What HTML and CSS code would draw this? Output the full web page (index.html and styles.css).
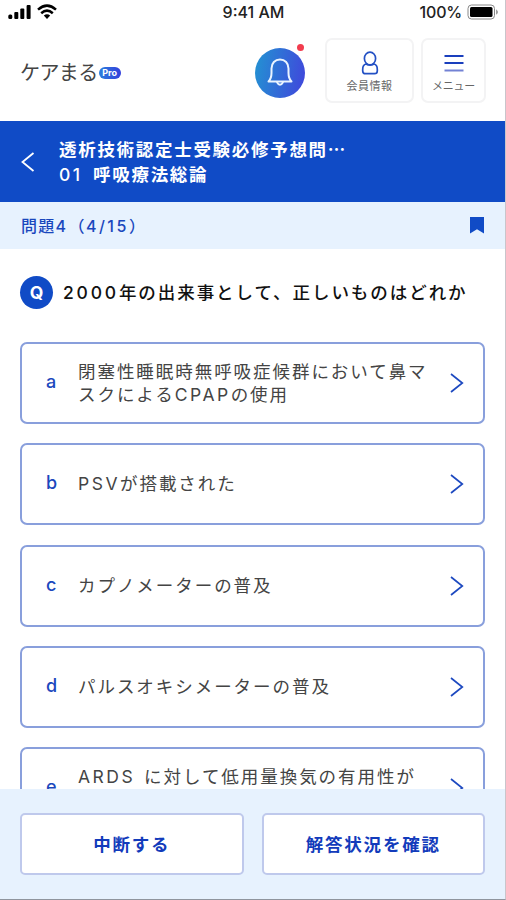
FILE: index.html
```html
<!DOCTYPE html>
<html lang="ja">
<head>
    <meta charset="UTF-8">
    <meta name="viewport" content="width=device-width, initial-scale=1.0">
    <title>ケアまる Pro</title>
    <link rel="stylesheet" href="styles.css">
</head>
<body>
    <div class="app">
        <div class="status-bar">
            <div class="signals">
                <svg width="24" height="16" viewBox="0 0 24 16">
                    <rect x="0.3" y="10.5" width="4" height="4.5" rx="1.5"/>
                    <rect x="6.3" y="8" width="4" height="7" rx="1"/>
                    <rect x="12.3" y="4.5" width="4" height="10.5" rx="1"/>
                    <rect x="18.6" y="1" width="4" height="14" rx="1"/>
                </svg>
                <svg class="wifi" width="20" height="16" viewBox="0 0 20 16">
                    <path d="M1 5.6Q10-2.4 19 5.6M4.2 9.2Q10 4 15.8 9.2" fill="none" stroke="#000" stroke-width="2.5"/>
                    <path d="M6.8 11.6Q10 9 13.2 11.6L10 15Z"/>
                </svg>
            </div>
            <span class="time">9:41 AM</span>
            <div class="power">
                <span>100%</span>
                <svg width="32" height="16" viewBox="0 0 32 16">
                    <rect x="1" y="1" width="26.5" height="14" rx="3.5" fill="none" stroke="#888"/>
                    <rect x="3" y="3" width="22.5" height="10" rx="1.5"/>
                    <path d="M29.2 5.2Q32.5 8 29.2 10.8Z" fill="#888"/>
                </svg>
            </div>
        </div>

        <header class="header">
            <div class="logo">ケアまる<span class="pro">Pro</span></div>
            <div class="bell">
                <svg width="26" height="30" viewBox="0 0 26 30" fill="none" stroke="#eaf4ff" stroke-width="2" stroke-linejoin="round">
                    <path d="M1.5 23.5H24.5C22 21 21.5 19 21.5 15V10.5C21.5 5 18 1.5 13 1.5S4.5 5 4.5 10.5V15C4.5 19 4 21 1.5 23.5Z"/>
                    <path d="M9.8 24Q13 29.5 16.2 24"/>
                </svg>
                <span class="dot"></span>
            </div>
            <div class="nav-card member">
                <svg width="18" height="24" viewBox="0 0 18 24" fill="#fff" stroke="#2350c4" stroke-width="1.7">
                    <ellipse cx="9" cy="7.5" rx="5.6" ry="6.3"/>
                    <path d="M5 13Q9 15.5 13 13C15.5 13.5 16.3 15 16.3 18.5V20Q16.3 22.7 13.5 22.7H4.5Q1.7 22.7 1.7 20V18.5C1.7 15 2.5 13.5 5 13Z"/>
                </svg>
                <span>会員情報</span>
            </div>
            <div class="nav-card menu">
                <svg width="20" height="24" viewBox="0 0 20 24" fill="none" stroke-width="2">
                    <path d="M0.5 5H19.5M0.5 12H19.5" stroke="#1a3fbd"/>
                    <path d="M0.5 19.5H19.5" stroke="#7382d4"/>
                </svg>
                <span>メニュー</span>
            </div>
        </header>

        <div class="title-bar">
            <svg width="14" height="20" viewBox="0 0 14 20" fill="none" stroke="#fff" stroke-width="1.8">
                <path d="M12.5 1L1.5 10L12.5 19"/>
            </svg>
            <div class="title">
                <div>透析技術認定士受験必修予想問…</div>
                <div><span class="latin">01</span> 呼吸療法総論</div>
            </div>
        </div>

        <div class="progress">
            <span>問題<span class="latin">4</span>（<span class="latin">4/15</span>）</span>
            <svg width="14" height="17" viewBox="0 0 14 17" fill="#104bc6">
                <path d="M0 0H14V16.5L7 12.2L0 16.5Z"/>
            </svg>
        </div>

        <main class="content">
            <div class="question">
                <span class="q-icon">Q</span>
                <span class="q-text"><span class="latin">2000</span>年の出来事として、正しいものはどれか</span>
            </div>
            <div class="options">
                <div class="option">
                    <span class="letter">a</span>
                    <span class="answer">閉塞性睡眠時無呼吸症候群において鼻マ<br>スクによる<span class="latin">CPAP</span>の使用</span>
                    <svg class="arrow" viewBox="0 0 14 20"><path d="M1 1L12.3 10L1 19"/></svg>
                </div>
                <div class="option">
                    <span class="letter">b</span>
                    <span class="answer"><span class="latin">PSV</span>が搭載された</span>
                    <svg class="arrow" viewBox="0 0 14 20"><path d="M1 1L12.3 10L1 19"/></svg>
                </div>
                <div class="option">
                    <span class="letter">c</span>
                    <span class="answer">カプノメーターの普及</span>
                    <svg class="arrow" viewBox="0 0 14 20"><path d="M1 1L12.3 10L1 19"/></svg>
                </div>
                <div class="option">
                    <span class="letter">d</span>
                    <span class="answer">パルスオキシメーターの普及</span>
                    <svg class="arrow" viewBox="0 0 14 20"><path d="M1 1L12.3 10L1 19"/></svg>
                </div>
                <div class="option">
                    <span class="letter">e</span>
                    <span class="answer"><span class="latin">ARDS</span> に対して低用量換気の有用性が<br>&nbsp;</span>
                    <svg class="arrow" viewBox="0 0 14 20"><path d="M1 1L12.3 10L1 19"/></svg>
                </div>
            </div>
        </main>

        <footer class="footer">
            <button class="button">中断する</button>
            <button class="button">解答状況を確認</button>
        </footer>
    </div>
</body>
</html>
```

FILE: styles.css
```css
* {
    box-sizing: border-box;
}

body {
    margin: 0;
    background-color: #fff;
    color: #444;
    font-family: "Noto Sans CJK JP", sans-serif;
    font-size: 17.5px;
    letter-spacing: 1.95px;
}

svg {
    display: block;
    flex-shrink: 0;
}

.app {
    display: flex;
    flex-direction: column;
    width: 506px;
    height: 900px;
    overflow: hidden;
    border-right: 1px solid #c9c5cb;
    border-bottom: 1px solid #8f959e;
}

.latin {
    font-family: Inter, sans-serif;
    letter-spacing: 2.5px;
}

/* status bar */
.status-bar {
    display: grid;
    grid-template-columns: 1fr auto 1fr;
    align-items: center;
    flex-shrink: 0;
    height: 24px;
    padding: 0 6px 0 8px;
    color: #222;
    font-family: Inter, sans-serif;
    font-size: 16px;
    font-weight: 500;
    letter-spacing: 0;
}

.signals,
.power {
    display: flex;
    align-items: center;
}

.wifi {
    margin-left: 5px;
}

.power {
    justify-content: flex-end;
    gap: 5px;
    letter-spacing: -0.2px;
}

/* header */
.header {
    display: flex;
    align-items: center;
    flex-shrink: 0;
    height: 97px;
    padding: 0 19px 5px 20px;
}

.logo {
    display: flex;
    align-items: center;
    flex: 1;
    padding-top: 3px;
    font-size: 20px;
    letter-spacing: -0.6px;
    white-space: nowrap;
}

.pro {
    width: 22px;
    height: 12px;
    margin-top: 3px;
    margin-left: 1px;
    border-radius: 6px;
    background: linear-gradient(90deg, #2b7fdc, #3340dc);
    color: #fff;
    font-family: Inter, sans-serif;
    font-size: 9px;
    font-weight: 700;
    line-height: 12px;
    letter-spacing: 0;
    text-align: center;
}

.bell {
    position: relative;
    display: flex;
    align-items: center;
    justify-content: center;
    width: 50px;
    height: 50px;
    margin-top: 6px;
    margin-right: 20px;
    border-radius: 50%;
    background: linear-gradient(100deg, #2294d2, #4144dc);
}

.dot {
    position: absolute;
    top: -4px;
    right: 1px;
    width: 7px;
    height: 7px;
    border-radius: 50%;
    background-color: #f23c4e;
}

.nav-card {
    display: flex;
    flex-direction: column;
    align-items: center;
    height: 65px;
    padding-top: 11px;
    border: 2px solid #f3f3f4;
    border-radius: 7px;
    color: #666;
    font-size: 11px;
    line-height: 16px;
    letter-spacing: 0.5px;
}

.nav-card span {
    margin-top: 2px;
}

.member {
    width: 89px;
    margin-right: 7px;
}

.menu {
    width: 65px;
    letter-spacing: -0.3px;
}

/* page title */
.title-bar {
    display: flex;
    align-items: center;
    flex-shrink: 0;
    gap: 24px;
    height: 81px;
    padding-left: 21px;
    background-color: #104bc6;
    color: #fff;
    font-weight: 700;
    line-height: 25px;
    letter-spacing: 1.7px;
}

.title {
    margin-top: -1px;
    word-spacing: 5px;
}

.title .latin {
    font-weight: 500;
    letter-spacing: 2.4px;
}

.progress {
    display: flex;
    align-items: center;
    justify-content: space-between;
    flex-shrink: 0;
    height: 47px;
    padding: 0 21px 2px;
    background-color: #e7f2fe;
    color: #1947bd;
    font-size: 16px;
    font-weight: 500;
    letter-spacing: 1.3px;
}

.progress svg {
    margin-top: 2px;
}

/* question */
.content {
    flex: 1;
    min-height: 0;
    padding: 27px 20px 0;
    overflow: hidden;
}

.question {
    display: flex;
    align-items: center;
    gap: 10px;
    height: 33px;
    margin-bottom: 33px;
    color: #111;
    font-weight: 500;
    white-space: nowrap;
}

.q-text {
    margin-top: -2px;
}

.question .latin {
    letter-spacing: 2.8px;
}

.q-icon {
    flex-shrink: 0;
    width: 33px;
    height: 33px;
    border-radius: 50%;
    background-color: #104bc6;
    color: #fff;
    font-family: Inter, sans-serif;
    font-weight: 700;
    line-height: 33px;
    letter-spacing: 0;
    text-align: center;
}

.options {
    display: flex;
    flex-direction: column;
    gap: 19.3px;
}

.option {
    display: flex;
    align-items: center;
    flex-shrink: 0;
    height: 82px;
    padding: 0 19px 0 24px;
    border: 2px solid #899fdc;
    border-radius: 7px;
    line-height: 23px;
    white-space: nowrap;
}

.letter {
    width: 32px;
    margin-top: -3px;
    color: #1b48bd;
    font-family: Inter, sans-serif;
    font-size: 18px;
    font-weight: 500;
}

.answer {
    flex: 1;
    margin-top: -2px;
    word-spacing: 3px;
}

.arrow {
    width: 14px;
    height: 20px;
    fill: none;
    stroke: #1d49c0;
    stroke-width: 1.7;
}

/* bottom buttons */
.footer {
    display: grid;
    grid-template-columns: 1fr 1fr;
    flex-shrink: 0;
    gap: 18px;
    height: 110px;
    padding: 24px 20px;
    background-color: #e7f2fe;
}

.button {
    height: 62px;
    padding: 0 0 2px;
    border: 2px solid #bfc9ec;
    border-radius: 5px;
    background-color: #fff;
    color: #123bbb;
    font-family: inherit;
    font-size: 17.5px;
    font-weight: 700;
    letter-spacing: 1.8px;
    cursor: pointer;
}
```
